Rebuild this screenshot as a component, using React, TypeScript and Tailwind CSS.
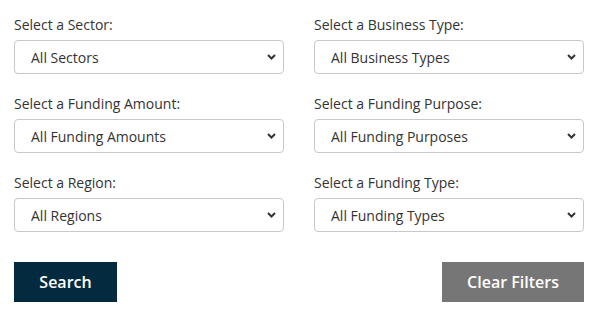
import React from "react";

const fields: [string, string][] = [
  ["Select a Sector:", "All Sectors"],
  ["Select a Business Type:", "All Business Types"],
  ["Select a Funding Amount:", "All Funding Amounts"],
  ["Select a Funding Purpose:", "All Funding Purposes"],
  ["Select a Region:", "All Regions"],
  ["Select a Funding Type:", "All Funding Types"],
];

function Field({ label, value }: { label: string; value: string }) {
  return (
    <div className="flex flex-col">
      <label className="text-[14px] leading-[20px] text-[#333333]">{label}</label>
      <div className="relative mt-[5px]">
        <select className="h-[34px] w-full appearance-none rounded-[4px] border border-[#c8c8c8] bg-white pl-[16px] pr-[30px] text-[14px] text-[#333333] outline-none" style={{ fontFamily: "'Open Sans', sans-serif" }}>
          <option>{value}</option>
        </select>
        <svg className="pointer-events-none absolute right-[8px] top-[14px]" width="9" height="6" viewBox="0 0 9 6">
          <path d="M1 1l3.5 3.5L8 1" fill="none" stroke="#333" strokeWidth="2" />
        </svg>
      </div>
    </div>
  );
}

export default function App() {
  return (
    <div className="w-[600px] h-[318px] bg-white pl-[14px] pr-[16px] pt-[15px]" style={{ fontFamily: "'Open Sans', sans-serif" }}>
      <div className="grid grid-cols-2 gap-x-[30px] gap-y-[20px]">
        {fields.map(([l, v]) => (
          <Field key={l} label={l} value={v} />
        ))}
      </div>
      <div className="mt-[30px] flex justify-between">
        <button className="h-[40px] w-[103px] bg-[#032a3f] text-[16px] font-semibold text-white">Search</button>
        <button className="h-[40px] w-[142px] bg-[#767676] text-[16px] font-semibold text-white">Clear Filters</button>
      </div>
    </div>
  );
}
